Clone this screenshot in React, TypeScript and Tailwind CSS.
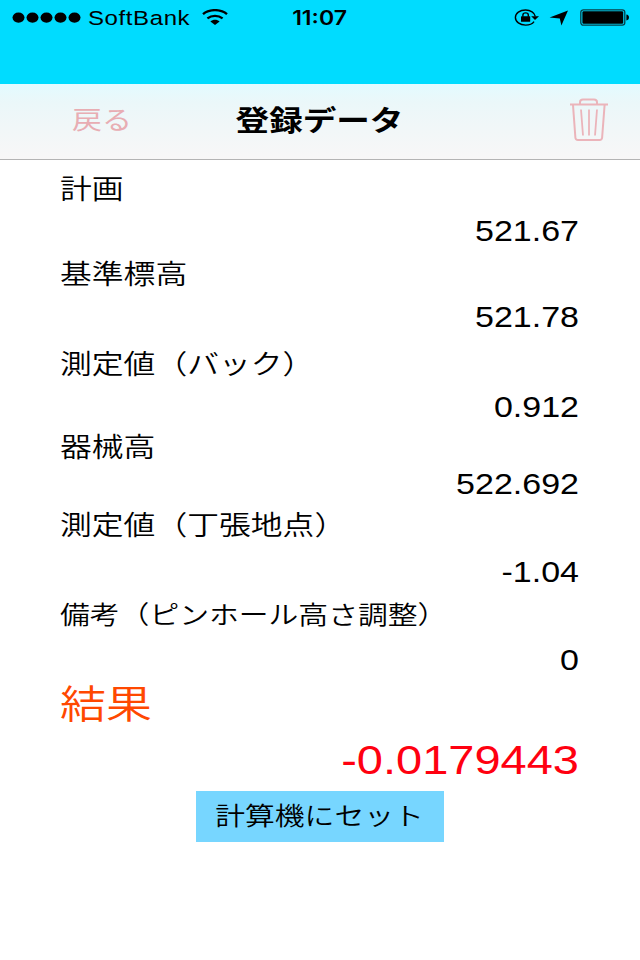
import clsx from 'clsx';

const fields = [
  { label: '計画', value: '521.67', top: 'mt-[10px]', gap: 'mt-[7px]', size: 'text-[31.8px]' },
  { label: '基準標高', value: '521.78', top: 'mt-[6px]', gap: 'mt-[8px]', size: 'text-[31.8px]' },
  { label: '測定値（バック）', value: '0.912', top: 'mt-[10px]', gap: 'mt-[8px]', size: 'text-[31.8px]' },
  { label: '器械高', value: '522.692', top: 'mt-[3px]', gap: 'mt-[2px]', size: 'text-[31.8px]' },
  { label: '測定値（丁張地点）', value: '-1.04', top: 'mt-[4px]', gap: 'mt-[12px]', size: 'text-[31.8px]' },
  { label: '備考（ピンホール高さ調整）', value: '0', top: 'mt-[6px]', gap: 'mt-[10px]', size: 'text-[29.8px]' },
];

function StatusBar() {
  return (
    <div className="flex h-[84px] items-start bg-[#00dcff] pl-[12px] pr-[10px] text-black">
      <div className="flex h-[35px] flex-1 items-center">
        <svg width="70" height="12" viewBox="0 0 70 12">
          {[6.5, 20.5, 34.5, 48.5, 62.5].map((cx) => (
            <ellipse key={cx} cx={cx} cy="5.6" rx="6" ry="5.1" />
          ))}
        </svg>
        <span className="ml-[6px] inline-block w-[102px] scale-y-[0.88] whitespace-nowrap text-[24px] leading-none tracking-[0.6px]">
          SoftBank
        </span>
        <svg className="ml-[11px]" width="28" height="18" viewBox="0 0 28 18" fill="none" stroke="currentColor">
          <path d="M2 5.2C8.5 -0.2 19.5 -0.2 26 5.2" strokeWidth="2.4" />
          <path d="M6.4 9.4C10.8 5.9 17.2 5.9 21.6 9.4" strokeWidth="2.3" />
          <path d="M14 15.9L9.4 12.4C12 10.3 16 10.3 18.6 12.4Z" fill="currentColor" stroke="none" />
        </svg>
      </div>
      <div className="flex h-[35px] items-center">
        <span className="relative left-[-1.5px] top-[0.5px] inline-block scale-y-[0.845] font-['Inter'] text-[23px] font-semibold leading-none">
          11:07
        </span>
      </div>
      <div className="flex h-[35px] flex-1 items-center justify-end">
        <svg width="26" height="18" viewBox="0 0 26 18" fill="none" stroke="currentColor">
          <path d="M20 12.6C18.3 15 15.2 16.1 11.6 16.1C5.8 16.1 1.4 12.7 1.4 8.5C1.4 4.3 5.8 1 11.6 1C16.6 1 20.6 3.7 21.3 7.4" strokeWidth="1.4" />
          <path d="M17.2 7.2H25L21 11Z" fill="currentColor" stroke="none" />
          <rect x="7" y="7.2" width="9.2" height="5.6" rx="0.6" fill="currentColor" stroke="none" />
          <path d="M8.9 7.8V6C8.9 3.2 14.3 3.2 14.3 6V7.8" strokeWidth="1.4" />
        </svg>
        <svg className="ml-[9px]" width="20" height="16" viewBox="0 0 20 16">
          <path d="M19 0.6L12.4 15.6L10.8 8.6L0.6 7.6Z" />
        </svg>
        <svg className="ml-[11px]" width="50" height="17" viewBox="0 0 50 17">
          <rect x="0.8" y="0.8" width="44" height="15.4" rx="2.6" fill="none" stroke="#063e48" strokeWidth="1.3" />
          <rect x="2.4" y="2.2" width="40.8" height="12.6" rx="1.2" />
          <path d="M46.4 5.6C49.8 5.6 49.8 11.4 46.4 11.4Z" />
        </svg>
      </div>
    </div>
  );
}

function TrashIcon() {
  return (
    <svg width="40" height="44" viewBox="0 0 40 44" fill="none" stroke="#ebb4ba" strokeWidth="2">
      <path d="M1 6.6H39" />
      <path d="M11 6V4.2C11 2.6 12.2 1.6 14 1.6H25C27 1.6 28 2.6 28 4.2V6" />
      <path d="M4 7L6.4 39.8C6.5 41.2 7.4 42 9 42H30.6C32.2 42 33 41.2 33.1 39.8L35.6 7" />
      <path d="M12 11.5L14 37.5M20 11.5V37.5M28 11.5L26 37.5" strokeWidth="1.8" />
    </svg>
  );
}

function NavBar() {
  return (
    <div className="flex h-[76px] items-center border-b border-[#b4b4b4] bg-linear-to-b from-[#e3fbff] via-[#ebf7f9] via-25% to-[#f8f7f7]">
      <button className="ml-[72px] w-[160px] text-left text-[30px] leading-none text-[#e8adb3]">
        <span className="relative top-[-1px] inline-block scale-y-[0.845]">戻る</span>
      </button>
      <h1 className="w-[175px] text-center text-[33.6px] font-bold leading-none">
        <span className="inline-block scale-y-[0.845] whitespace-nowrap">登録データ</span>
      </h1>
      <button className="mb-[3px] ml-[162px]">
        <TrashIcon />
      </button>
    </div>
  );
}

export default function App() {
  return (
    <div className="h-[960px] w-[640px] overflow-hidden bg-white font-['Liberation_Sans','Noto_Sans_CJK_JP',sans-serif] text-black">
      <StatusBar />
      <NavBar />
      <main className="flex flex-col pl-[60px] pr-[61px]">
        {fields.map((field) => (
          <div key={field.label} className={clsx('flex flex-col', field.top)}>
            <div className={clsx('flex h-[36px] items-center whitespace-nowrap leading-none', field.size)}>
              <span className="inline-block scale-y-[0.845] font-['Noto_Sans_CJK_JP',sans-serif] font-[350]">
                {field.label}
              </span>
            </div>
            <div className={clsx('flex h-[36px] items-center justify-end text-[34px] leading-none', field.gap)}>
              <span className="inline-block scale-y-[0.845]">{field.value}</span>
            </div>
          </div>
        ))}
        <div className="mt-[1px] flex h-[44px] items-center text-[46px] leading-none text-[#ff4800]">
          <span className="inline-block scale-y-[0.845] font-['Noto_Sans_CJK_JP',sans-serif] font-[350]">結果</span>
        </div>
        <div className="mt-[14px] flex h-[44px] items-center justify-end text-[47px] leading-none text-[#ff0010]">
          <span className="inline-block scale-y-[0.87]">-0.0179443</span>
        </div>
        <button className="mt-[10px] h-[51px] w-[248px] self-center bg-[#77d6ff] pb-[2px] text-[29.8px] leading-none">
          <span className="inline-block scale-y-[0.845] whitespace-nowrap font-['Noto_Sans_CJK_JP',sans-serif] font-[350]">
            計算機にセット
          </span>
        </button>
      </main>
    </div>
  );
}
